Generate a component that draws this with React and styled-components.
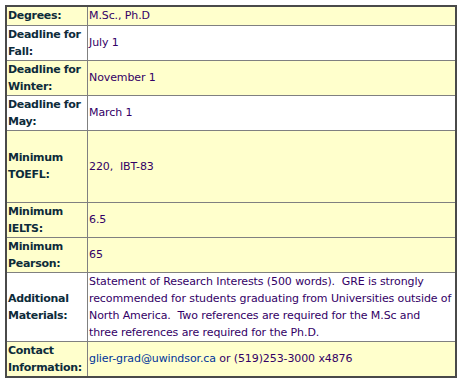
import React from "react";
import styled, { createGlobalStyle } from "styled-components";

const Global = createGlobalStyle`
  body {
    margin: 0;
    padding: 5px;
    background: #fff;
    font-family: "DejaVu Sans", Verdana, sans-serif;
  }
`;

const Table = styled.table`
  width: 452px;
  border-collapse: collapse;
  border: 2px solid #4a4a4a;
  font-size: 11px;
  line-height: 17px;
`;

const Row = styled.tr`
  height: ${p => p.h}px;
  background: ${p => (p.alt ? "#ffffff" : "#ffffcc")};
`;

const Label = styled.td`
  width: 78px;
  padding: 0 1px;
  border: 1px solid #808080;
  color: #0d2b3a;
  font-weight: bold;
  letter-spacing: -0.3px;
  vertical-align: middle;
`;

const Value = styled.td`
  padding: 0 1px;
  border: 1px solid #808080;
  color: #330066;
  letter-spacing: -0.1px;
  white-space: pre-wrap;
  vertical-align: middle;
`;

const Link = styled.a`
  color: #003399;
  text-decoration: none;
`;

const rows = [
  { label: "Degrees:", value: "M.Sc., Ph.D", h: 19 },
  { label: "Deadline for Fall:", value: "July 1", h: 35, alt: true },
  { label: "Deadline for Winter:", value: "November 1", h: 35 },
  { label: "Deadline for May:", value: "March 1", h: 35, alt: true },
  { label: "Minimum TOEFL:", value: "220,  IBT-83", h: 72 },
  { label: "Minimum IELTS:", value: "6.5", h: 35 },
  { label: "Minimum Pearson:", value: "65", h: 35 },
  {
    label: "Additional Materials:",
    value:
      "Statement of Research Interests (500 words).  GRE is strongly recommended for students graduating from Universities outside of North America.  Two references are required for the M.Sc and\nthree references are required for the Ph.D.",
    h: 69,
    alt: true,
  },
];

export default function App() {
  return (
    <>
      <Global />
      <Table>
        <tbody>
          {rows.map((r, i) => (
            <Row key={i} h={r.h} alt={r.alt}>
              <Label>{r.label}</Label>
              <Value>{r.value}</Value>
            </Row>
          ))}
          <Row h={35}>
            <Label>Contact Information:</Label>
            <Value>
              <Link href="#">glier-grad@uwindsor.ca</Link> or (519)253-3000 x4876
            </Value>
          </Row>
        </tbody>
      </Table>
    </>
  );
}
